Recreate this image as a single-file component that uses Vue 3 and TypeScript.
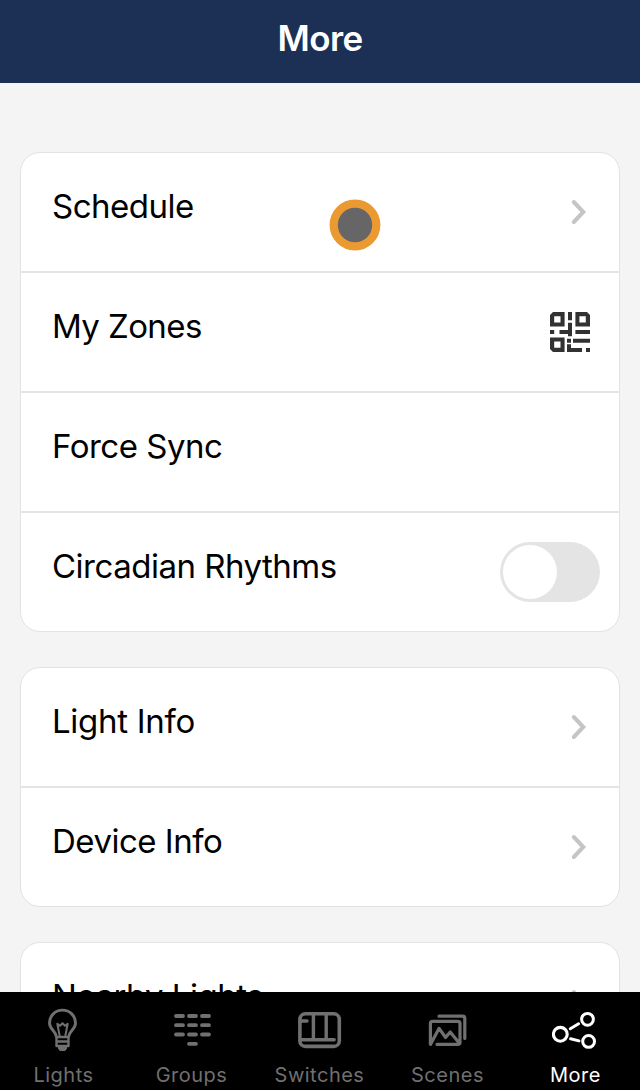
<script setup lang="ts">
interface Row {
  label: string
  key: string
  accessory: 'chevron' | 'qr' | 'toggle' | 'none'
}

const groups: Row[][] = [
  [
    { label: 'Schedule', key: 'schedule', accessory: 'chevron' },
    { label: 'My Zones', key: 'zones', accessory: 'qr' },
    { label: 'Force Sync', key: 'sync', accessory: 'none' },
    { label: 'Circadian Rhythms', key: 'circadian', accessory: 'toggle' },
  ],
  [
    { label: 'Light Info', key: 'light', accessory: 'chevron' },
    { label: 'Device Info', key: 'device', accessory: 'chevron' },
  ],
  [{ label: 'Nearby Lights', key: 'nearby', accessory: 'chevron' }],
]
</script>

<template>
  <div class="screen">
    <header class="header"><h1>More</h1></header>

    <main class="content">
      <section v-for="(rows, i) in groups" :key="i" class="card">
        <div v-for="row in rows" :key="row.key" class="row">
          <span class="label" :class="row.key">{{ row.label }}</span>
          <svg v-if="row.accessory === 'chevron'" class="chevron" width="20" height="28" viewBox="0 0 20 28">
            <path d="M4.8 4 14.3 14 4.8 24" />
          </svg>
          <svg v-else-if="row.accessory === 'qr'" class="qr" width="40" height="40" viewBox="0 0 40 40">
            <path fill-rule="evenodd" d="M3 0H14.6V14.6H0V3ZM4.2 4.2V10.5H10.5V4.2Z" />
            <path fill-rule="evenodd" d="M25.4 0H37L40 3V14.6H25.4ZM29.4 4.2V10.5H35.8V4.2Z" />
            <path fill-rule="evenodd" d="M0 25.4H14.6V40H3L0 37ZM4.2 29.4V35.8H10.5V29.4Z" />
            <path d="M18 0H22V8.3H18ZM18 10.7H22V24.2H18V22H9.5V18H18ZM0 18H4.2V22H0ZM25.4 18H40V22H25.4ZM17 26.7H21V30.8H17ZM23 26.7H40V30.8H23ZM17 32.3H21V36H32V40H17ZM36 36H40V40H36Z" />
          </svg>
          <span v-else-if="row.accessory === 'toggle'" class="toggle"><span class="knob" /></span>
        </div>
      </section>
    </main>

    <svg class="touch" width="54" height="54" viewBox="0 0 54 54">
      <circle cx="27" cy="27" r="21.3" />
    </svg>

    <nav class="tabs">
      <div class="tab">
        <svg viewBox="40 1006 48 48">
          <path d="M56.3 1036.5C56 1031 49.5 1029.5 49.5 1022.9A13 12.8 0 0 1 75.5 1022.9C75.5 1029.5 69 1031 68.7 1036.5" stroke-width="2.9" />
          <path d="M56.5 1037V1046H68.5V1037ZM56.5 1041.5H68.5" stroke-width="2.4" />
          <path d="M59.6 1035.5 57.3 1023.8 60 1025.8 62.5 1023.2 65 1025.8 67.7 1023.8 65.4 1035.5" stroke-width="2" />
          <path class="solid" d="M58 1046.5H67V1048.5L65 1051H60L58 1048.5Z" />
        </svg>
        <span>Lights</span>
      </div>
      <div class="tab">
        <svg viewBox="168 1006 48 48">
          <path d="M176 1016H183M189 1016H196M202 1016H209M176 1025.2H183M189 1025.2H196M202 1025.2H209M176 1034.5H183M189 1034.5H196M202 1034.5H209M189 1043.8H196" stroke-width="3.8" />
        </svg>
        <span>Groups</span>
      </div>
      <div class="tab">
        <svg viewBox="296 1006 48 48">
          <rect x="299.9" y="1013.8" width="39.4" height="32.6" rx="5.5" stroke-width="3.6" />
          <path d="M313.4 1014V1039M326.2 1014V1039M301 1039.7H334.2M301 1021H307" stroke-width="3.4" />
        </svg>
        <span>Switches</span>
      </div>
      <div class="tab">
        <svg viewBox="424 1006 48 48">
          <path d="M439 1016.2H462.5Q464.8 1016.2 464.8 1018.5V1038.5M430.4 1044V1023.5Q430.4 1021.3 432.6 1021.3H457.8Q460 1021.3 460 1023.5V1042.2Q460 1044.4 457.8 1044.4H437M430.6 1044.3 439.1 1028.3 445.6 1037.5 450.2 1031.9 459.6 1043.5" stroke-width="3.2" />
        </svg>
        <span>Scenes</span>
      </div>
      <div class="tab active">
        <svg viewBox="552 1006 48 48">
          <circle cx="560.3" cy="1034.3" r="6.9" stroke-width="3.1" />
          <circle cx="587.5" cy="1019.3" r="5.9" stroke-width="3" />
          <circle cx="588.6" cy="1041.4" r="5.9" stroke-width="3" />
          <path d="M570.3 1028.8 578.6 1023.8M570.6 1038.8 579 1040.9" stroke-width="3" />
        </svg>
        <span>More</span>
      </div>
    </nav>
  </div>
</template>

<style>
body {
  margin: 0;
}
</style>

<style scoped>
.screen {
  position: relative;
  display: flex;
  flex-direction: column;
  width: 640px;
  height: 1090px;
  overflow: hidden;
  background: #f4f4f4;
  font-family: Inter, 'Liberation Sans', sans-serif;
}
.header {
  flex: none;
  height: 83px;
  background: #1c3055;
  color: #fff;
  text-align: center;
}
h1 {
  margin: 0;
  padding-top: 17px;
  font-size: 35px;
  line-height: 42px;
  font-weight: 590;
  letter-spacing: -0.6px;
}
.content {
  flex: 1;
  min-height: 0;
  overflow: hidden;
  display: flex;
  flex-direction: column;
  gap: 35px;
  padding: 69px 20px 0;
}
.card {
  flex: none;
  box-sizing: border-box;
  border: 1px solid #e2e2e3;
  border-radius: 20px;
  background: #fff;
}
.row {
  box-sizing: border-box;
  display: flex;
  justify-content: space-between;
  align-items: flex-start;
  height: 120px;
  padding: 32px 0 0 31px;
  border-bottom: 2px solid #e4e4e5;
}
.row:last-child {
  height: 118px;
  border-bottom: 0;
}
.label {
  font-size: 33px;
  line-height: 43px;
  letter-spacing: -0.5px;
  color: #000;
  white-space: nowrap;
}
.zones {
  letter-spacing: -0.6px;
}
.light {
  letter-spacing: -0.3px;
}
.chevron {
  margin: 13px 30px 0 0;
  fill: none;
  stroke: #c5c5c6;
  stroke-width: 4;
  stroke-linecap: round;
}
.qr {
  margin: 7px 29px 0 0;
  fill: #323233;
}
.toggle {
  box-sizing: border-box;
  width: 100px;
  height: 60px;
  margin: -3px 19px 0 0;
  padding: 3px;
  border-radius: 30px;
  background: #e4e4e4;
}
.knob {
  display: block;
  width: 54px;
  height: 54px;
  border-radius: 50%;
  background: #fff;
}
.touch {
  position: absolute;
  left: 328px;
  top: 198px;
  fill: #666;
  stroke: #ea9a31;
  stroke-width: 8.2;
}
.tabs {
  flex: none;
  display: grid;
  grid-template-columns: repeat(5, 1fr);
  height: 98px;
  background: #000;
}
.tab {
  display: flex;
  flex-direction: column;
  align-items: center;
  padding-top: 14px;
  color: #707070;
  font-size: 20px;
  line-height: 24px;
  letter-spacing: 0.5px;
}
.tab.active {
  color: #fff;
}
.tab span {
  margin-right: 1px;
}
.tab svg {
  width: 48px;
  height: 48px;
  margin-bottom: 9px;
  fill: none;
  stroke: currentColor;
  stroke-linecap: round;
  stroke-linejoin: round;
}
.tab .solid {
  fill: currentColor;
  stroke: none;
}
</style>
